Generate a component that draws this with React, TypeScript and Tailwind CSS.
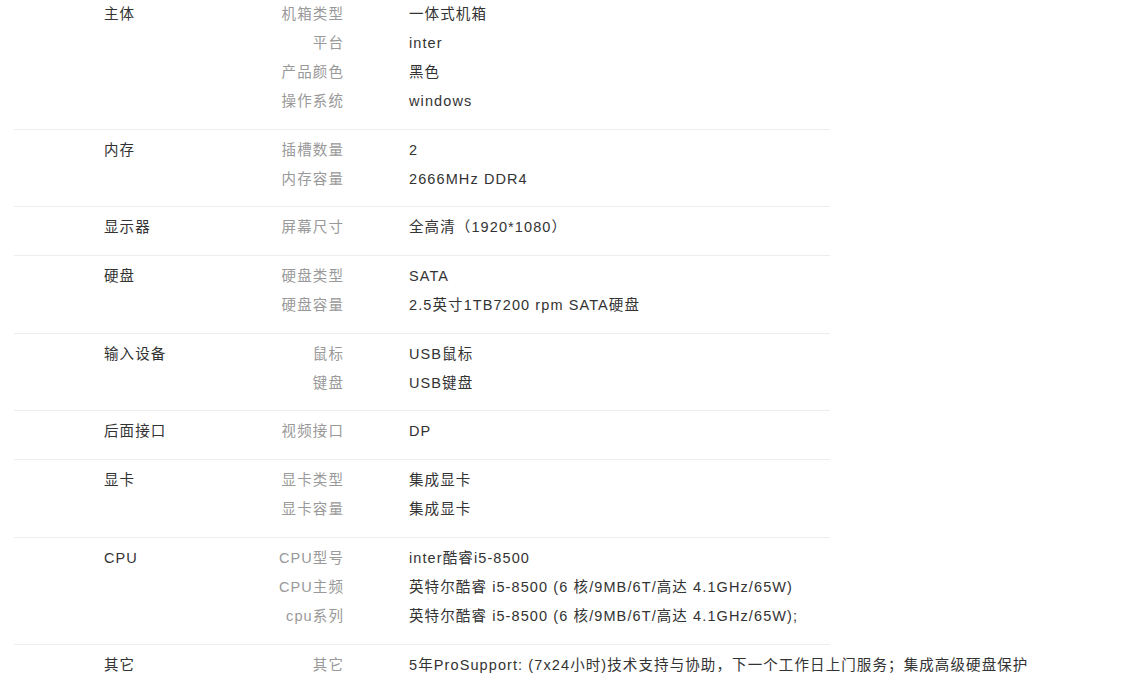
const groups: { name: string; rows: [string, string][] }[] = [
  {
    name: "主体",
    rows: [
      ["机箱类型", "一体式机箱"],
      ["平台", "inter"],
      ["产品颜色", "黑色"],
      ["操作系统", "windows"],
    ],
  },
  {
    name: "内存",
    rows: [
      ["插槽数量", "2"],
      ["内存容量", "2666MHz DDR4"],
    ],
  },
  { name: "显示器", rows: [["屏幕尺寸", "全高清（1920*1080）"]] },
  {
    name: "硬盘",
    rows: [
      ["硬盘类型", "SATA"],
      ["硬盘容量", "2.5英寸1TB7200 rpm SATA硬盘"],
    ],
  },
  {
    name: "输入设备",
    rows: [
      ["鼠标", "USB鼠标"],
      ["键盘", "USB键盘"],
    ],
  },
  { name: "后面接口", rows: [["视频接口", "DP"]] },
  {
    name: "显卡",
    rows: [
      ["显卡类型", "集成显卡"],
      ["显卡容量", "集成显卡"],
    ],
  },
  {
    name: "CPU",
    rows: [
      ["CPU型号", "inter酷睿i5-8500"],
      ["CPU主频", "英特尔酷睿 i5-8500 (6 核/9MB/6T/高达 4.1GHz/65W)"],
      ["cpu系列", "英特尔酷睿 i5-8500 (6 核/9MB/6T/高达 4.1GHz/65W);"],
    ],
  },
  {
    name: "其它",
    rows: [["其它", "5年ProSupport: (7x24小时)技术支持与协助，下一个工作日上门服务；集成高级硬盘保护"]],
  },
];

export default function App() {
  return (
    <div
      className="h-[676px] overflow-hidden bg-white text-[14.5px] tracking-[1.1px] text-[#333]"
      style={{ fontFamily: '"Liberation Sans", Arial, "Noto Sans CJK SC", sans-serif' }}
    >
      <div className="ml-[14px] w-[816px] -mt-[6px]">
        {groups.map((g) => (
          <div key={g.name} className="flex border-b border-[#eee] pt-[6px] pb-[12.7px]">
            <div className="w-[200px] shrink-0 pl-[90px] leading-[29px] text-[#333]">{g.name}</div>
            <div className="flex-1">
              {g.rows.map(([k, v]) => (
                <div key={k + v} className="flex leading-[29px]">
                  <div className="w-[130px] shrink-0 text-right text-[#999]">{k}</div>
                  <div className="pl-[65px] whitespace-nowrap text-[#333]">{v}</div>
                </div>
              ))}
            </div>
          </div>
        ))}
      </div>
    </div>
  );
}
